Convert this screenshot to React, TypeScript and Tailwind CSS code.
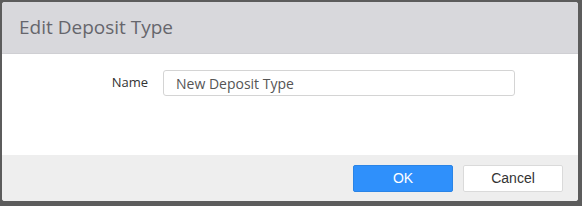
import { useState } from "react";

export default function App() {
  const [name, setName] = useState("New Deposit Type");

  return (
    <div className="w-[582px] h-[206px] bg-[#5c5c5c] pt-[2px] pl-[2px] pr-[4px] pb-[5px]">
      <div className="h-full flex flex-col bg-white rounded-[3px] overflow-hidden font-['Segoe_UI','Open_Sans',sans-serif]">
        {/* Header */}
        <div className="h-[52px] shrink-0 flex items-center px-[17px] bg-[#d8d8dc] border-b border-[#cfcfd3]">
          <h1 className="text-[19px] text-[#66666c] leading-none">Edit Deposit Type</h1>
        </div>

        {/* Body */}
        <div className="flex-1 flex items-start pt-[16px]">
          <label className="w-[146px] text-right text-[13px] text-[#333] pt-[3px]">Name</label>
          <input
            value={name}
            onChange={(e) => setName(e.target.value)}
            className="ml-[15px] w-[352px] h-[26px] px-[12px] text-[14px] text-[#555] border border-[#d4d4d4] rounded-[3px] outline-none"
          />
        </div>

        {/* Footer */}
        <div className="h-[46px] shrink-0 flex items-start justify-end gap-[10px] pt-[10px] pr-[15px] bg-[#eeeeee] font-['Liberation_Sans',Arial,sans-serif]">
          <button className="w-[100px] h-[27px] rounded-[2px] bg-[#2f90fb] border border-[#2a84e6] text-white text-[14px]">
            OK
          </button>
          <button className="w-[100px] h-[27px] rounded-[2px] bg-white border border-[#dadada] text-[#333] text-[14px]">
            Cancel
          </button>
        </div>
      </div>
    </div>
  );
}
